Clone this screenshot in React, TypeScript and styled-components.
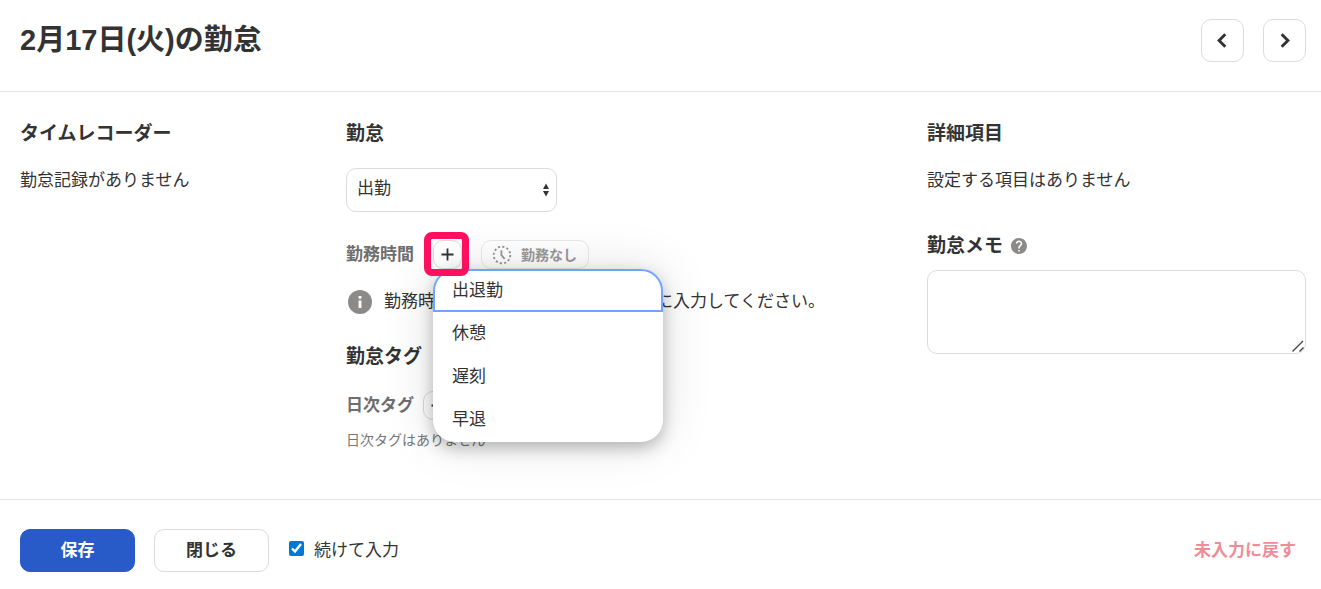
import React from "react";
import styled, { createGlobalStyle } from "styled-components";

const GlobalStyle = createGlobalStyle`
  *, *::before, *::after { box-sizing: border-box; }
  body {
    margin: 0;
    background: #fff;
    color: #333;
    font-family: "Liberation Sans", "Noto Sans CJK JP", sans-serif;
    font-size: 17px;
    line-height: 24px;
  }
  button, select, textarea, input { font: inherit; color: inherit; }
`;

const Header = styled.header`
  display: flex;
  align-items: flex-start;
  justify-content: space-between;
  padding: 19px 15px 29px 20px;
  border-bottom: 1px solid #e5e5e5;
`;

const Title = styled.h1`
  margin: 0;
  font-size: 29px;
  line-height: 42px;
  font-weight: 700;
`;

const Pager = styled.nav`
  display: flex;
  gap: 19px;
`;

const Button = styled.button<{ $primary?: boolean; $square?: boolean }>`
  display: inline-flex;
  align-items: center;
  justify-content: center;
  width: ${(p) => (p.$square ? "43px" : "115px")};
  height: 43px;
  padding: 0;
  border: 1px solid ${(p) => (p.$primary ? "#285ac8" : "#dcdcdc")};
  border-radius: 10px;
  background: ${(p) => (p.$primary ? "#285ac8" : "#fff")};
  color: ${(p) => (p.$primary ? "#fff" : "#333")};
  font-weight: 700;
  cursor: pointer;
`;

const Content = styled.main`
  display: grid;
  grid-template-columns: minmax(0, 306fr) minmax(0, 561fr) minmax(0, 379fr);
  column-gap: 20px;
  padding: 30px 15px 47px 20px;
`;

const Heading = styled.h2`
  margin: 0;
  font-size: 19px;
  line-height: 24px;
  font-weight: 700;
`;

const Paragraph = styled.p`
  margin: 23px 0 0;
`;

const SelectBox = styled.div`
  position: relative;
  width: 211px;
  margin-top: 22px;
`;

const Select = styled.select`
  display: block;
  appearance: none;
  width: 100%;
  height: 44px;
  padding: 0 28px 2px 10px;
  border: 1px solid #dcdcdc;
  border-radius: 10px;
  background: #fff;
`;

const SelectArrows = styled.svg`
  position: absolute;
  right: 7px;
  top: 15px;
  pointer-events: none;
`;

const FieldRow = styled.div`
  display: flex;
  align-items: center;
  height: 29px;
`;

const WorkRow = styled(FieldRow)`
  margin-top: 28px;
`;

const FieldLabel = styled.h3`
  margin: 0;
  width: 68px;
  font-size: 17px;
  line-height: 24px;
  font-weight: 700;
  color: #6e6e6e;
  white-space: nowrap;
`;

const AddWrap = styled.div`
  position: relative;
  margin: 0 19px;
`;

const AddButton = styled.button`
  display: flex;
  align-items: center;
  justify-content: center;
  width: 29px;
  height: 29px;
  padding: 0;
  border: 1px solid #dcdcdc;
  border-radius: 10px;
  background: #fff;
  cursor: pointer;
`;

const TagAddButton = styled(AddButton)`
  margin-left: 9px;
`;

const Highlight = styled.div`
  position: absolute;
  inset: -8px -7px -7px -9px;
  z-index: 3;
  border: 7px solid #ff0f5f;
  border-radius: 8px;
  pointer-events: none;
`;

const Menu = styled.ul`
  position: absolute;
  top: 100%;
  left: 0;
  z-index: 2;
  width: 230px;
  margin: 0;
  padding: 0 0 1px;
  list-style: none;
  border-radius: 22px;
  background: #fff;
  box-shadow: 0 6px 16px rgba(0, 0, 0, 0.25), 0 0 52px rgba(0, 0, 0, 0.12);
`;

const MenuItem = styled.button<{ $active?: boolean }>`
  display: block;
  width: 100%;
  height: 43px;
  padding: 0 17px;
  border: 2px solid ${(p) => (p.$active ? "#72a4ff" : "transparent")};
  border-radius: ${(p) => (p.$active ? "22px 22px 0 0" : "0")};
  background: transparent;
  text-align: left;
  cursor: pointer;
`;

const NoWorkButton = styled.button`
  display: flex;
  align-items: center;
  gap: 9px;
  width: 108px;
  height: 29px;
  padding: 0 10px;
  border: 1px solid #e9e9e9;
  border-radius: 10px;
  background: transparent;
  color: #999;
  font-size: 14px;
  line-height: 20px;
  font-weight: 700;
  white-space: nowrap;
`;

const Notice = styled.p`
  display: flex;
  align-items: center;
  gap: 12px;
  margin: 21px 0 0 2px;
  white-space: nowrap;
`;

const TagHeading = styled(Heading)`
  margin-top: 31px;
`;

const TagRow = styled(FieldRow)`
  margin-top: 22px;
`;

const Hint = styled.p`
  margin: 8px 0 0;
  font-size: 14px;
  line-height: 24px;
  color: #777;
`;

const MemoLabel = styled.label`
  display: flex;
  align-items: center;
  gap: 8px;
  margin-top: 41px;
  font-size: 19px;
  line-height: 24px;
  font-weight: 700;
`;

const MemoBox = styled.div`
  position: relative;
  margin-top: 12px;
`;

const Memo = styled.textarea`
  display: block;
  width: 100%;
  height: 84px;
  padding: 10px;
  border: 1px solid #dcdcdc;
  border-radius: 10px;
  resize: vertical;

  &::-webkit-resizer {
    background: transparent;
  }
`;

const Grip = styled.svg`
  position: absolute;
  right: 2px;
  bottom: 2px;
  pointer-events: none;
`;

const Footer = styled.footer`
  display: flex;
  align-items: center;
  padding: 29px 25px 17px 20px;
  border-top: 1px solid #e5e5e5;
`;

const Actions = styled.div`
  display: flex;
  gap: 19px;
`;

const CheckLabel = styled.label`
  display: flex;
  align-items: center;
  gap: 10px;
  margin: 0 auto 0 20px;
`;

const Checkbox = styled.input`
  width: 15px;
  height: 15px;
  margin: 0 0 4px;
  accent-color: #0078d7;
`;

const ResetButton = styled.button`
  padding: 0;
  border: 0;
  background: none;
  color: #f08c98;
  font-weight: 700;
  cursor: pointer;
`;

const Chevron = ({ d }: { d: string }) => (
  <svg width="21" height="21" viewBox="0 0 21 21" fill="none" stroke="#333" strokeWidth="2.9" aria-hidden="true">
    <path d={d} />
  </svg>
);

const PlusIcon = () => (
  <svg width="13" height="13" viewBox="0 0 13 13" stroke="#333" strokeWidth="1.8" aria-hidden="true">
    <path d="M6.5 .5v12M.5 6.5h12" />
  </svg>
);

const DottedClock = () => (
  <svg width="20" height="20" viewBox="0 0 20 20" fill="none" stroke="#999" aria-hidden="true">
    <circle cx="10" cy="10" r="8.3" strokeWidth="1.9" strokeDasharray="2.2 2.146" />
    <path d="M9.4 5.2v5l3.2 3.6" strokeWidth="1.8" />
  </svg>
);

const InfoIcon = () => (
  <svg width="24" height="24" viewBox="0 0 24 24" aria-hidden="true">
    <circle cx="12" cy="12" r="12" fill="#8c8a88" />
    <path d="M10.6 6h2.8v2.7h-2.8zM10.6 10.4h2.8V18h-2.8z" fill="#fff" />
  </svg>
);

const HelpIcon = () => (
  <svg width="16" height="16" viewBox="2 2 20 20" aria-hidden="true">
    <path
      fill="#8c8a88"
      d="M12 2C6.48 2 2 6.48 2 12s4.48 10 10 10 10-4.48 10-10S17.52 2 12 2zm1 17h-2v-2h2v2zm2.07-7.75l-.9.92C13.45 12.9 13 13.5 13 15h-2v-.5c0-1.1.45-2.1 1.17-2.83l1.24-1.26c.37-.36.59-.86.59-1.41 0-1.1-.9-2-2-2s-2 .9-2 2H8c0-2.21 1.79-4 4-4s4 1.79 4 4c0 .88-.36 1.68-.93 2.25z"
    />
  </svg>
);

const menuItems = ["出退勤", "休憩", "遅刻", "早退"];

export default function App() {
  return (
    <>
      <GlobalStyle />
      <Header>
        <Title>2月17日(火)の勤怠</Title>
        <Pager aria-label="日付の移動">
          <Button $square aria-label="前の日">
            <Chevron d="M13.3 4.3 7.1 10.5l6.2 6.2" />
          </Button>
          <Button $square aria-label="次の日">
            <Chevron d="m7.7 4.3 6.2 6.2-6.2 6.2" />
          </Button>
        </Pager>
      </Header>

      <Content>
        <section>
          <Heading>タイムレコーダー</Heading>
          <Paragraph>勤怠記録がありません</Paragraph>
        </section>

        <section>
          <Heading>勤怠</Heading>
          <SelectBox>
            <Select aria-label="勤怠" defaultValue="出勤">
              <option>出勤</option>
            </Select>
            <SelectArrows width="8" height="14" viewBox="0 0 8 14" fill="#333" aria-hidden="true">
              <path d="M4 .5 7 6H1zM4 13.5 1 8h6z" />
            </SelectArrows>
          </SelectBox>

          <WorkRow>
            <FieldLabel>勤務時間</FieldLabel>
            <AddWrap>
              <AddButton aria-label="勤務時間を追加" aria-expanded="true">
                <PlusIcon />
              </AddButton>
              <Menu>
                {menuItems.map((item, index) => (
                  <li key={item}>
                    <MenuItem $active={index === 0}>{item}</MenuItem>
                  </li>
                ))}
              </Menu>
              <Highlight />
            </AddWrap>
            <NoWorkButton disabled>
              <DottedClock />
              勤務なし
            </NoWorkButton>
          </WorkRow>
          <Notice>
            <InfoIcon />
            勤務時間は出勤時刻と退勤時刻を順に入力してください。
          </Notice>

          <TagHeading>勤怠タグ</TagHeading>
          <TagRow>
            <FieldLabel>日次タグ</FieldLabel>
            <TagAddButton aria-label="日次タグを追加">
              <PlusIcon />
            </TagAddButton>
          </TagRow>
          <Hint>日次タグはありません</Hint>
        </section>

        <section>
          <Heading>詳細項目</Heading>
          <Paragraph>設定する項目はありません</Paragraph>
          <MemoLabel htmlFor="memo">
            勤怠メモ
            <HelpIcon />
          </MemoLabel>
          <MemoBox>
            <Memo id="memo" />
            <Grip width="12" height="12" viewBox="0 0 12 12" stroke="#444" strokeWidth="1.4" aria-hidden="true">
              <path d="M.5 11.5 11 1M7.5 11.5 11.5 7.5" />
            </Grip>
          </MemoBox>
        </section>
      </Content>

      <Footer>
        <Actions>
          <Button $primary>保存</Button>
          <Button>閉じる</Button>
        </Actions>
        <CheckLabel>
          <Checkbox type="checkbox" defaultChecked />
          続けて入力
        </CheckLabel>
        <ResetButton>未入力に戻す</ResetButton>
      </Footer>
    </>
  );
}
